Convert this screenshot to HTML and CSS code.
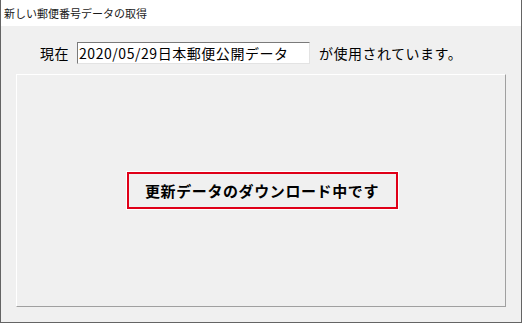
FILE: index.html
```html
<!DOCTYPE html>
<html lang="ja">
<head>
    <meta charset="UTF-8">
    <title>新しい郵便番号データの取得</title>
    <link rel="stylesheet" href="styles.css">
</head>
<body>
    <div class="window">
        <div class="titlebar">新しい郵便番号データの取得</div>
        <div class="content">
            <div class="status-row">
                <span class="label">現在</span>
                <input type="text" class="data-box" value="2020/05/29日本郵便公開データ" readonly>
                <span class="label">が使用されています。</span>
            </div>
            <div class="panel">
                <div class="progress-box">更新データのダウンロード中です</div>
            </div>
        </div>
    </div>
</body>
</html>
```

FILE: styles.css
```css
body {
    margin: 0;
    padding: 0;
    font-family: "Noto Sans CJK JP", "Noto Sans", sans-serif;
    color: #000000;
}
.window {
    width: 522px;
    height: 323px;
    box-sizing: border-box;
    border: 1px solid #646464;
    border-top: none;
    background: #f0f0f0;
    display: flex;
    flex-direction: column;
}
.titlebar {
    height: 26px;
    flex: none;
    background: #ffffff;
    padding-left: 3px;
    font-size: 11px;
    line-height: 26px;
    color: #1a1a1a;
}
.content {
    flex: 1;
    display: flex;
    flex-direction: column;
    padding: 16px 15px 15px 15px;
}
.status-row {
    display: flex;
    align-items: center;
    height: 22px;
    padding-left: 24px;
    font-size: 14px;
}
.status-row .label {
    line-height: 22px;
    letter-spacing: 0.5px;
}
.data-box {
    width: 233px;
    height: 22px;
    box-sizing: border-box;
    margin: 0 9px 0 8px;
    padding: 0 1px;
    border: 1px solid;
    border-color: #7a7a7a #e3e3e3 #e3e3e3 #7a7a7a;
    background: #ffffff;
    font-family: "Noto Sans CJK JP", "Noto Sans", sans-serif;
    font-size: 14px;
    letter-spacing: 0.55px;
    color: #000000;
    outline: none;
}
.panel {
    margin-top: 10px;
    flex: 1;
    border: 1px solid;
    border-color: #ffffff #a0a0a0 #a0a0a0 #ffffff;
    display: flex;
    justify-content: center;
    align-items: center;
}
.progress-box {
    width: 271px;
    height: 37px;
    box-sizing: border-box;
    border: 2px solid #e00018;
    box-shadow: 0 0 0 1px #ffffff;
    display: flex;
    justify-content: center;
    align-items: center;
    font-size: 15px;
    font-weight: bold;
    letter-spacing: 0.6px;
    margin-left: 2px;
}
```
